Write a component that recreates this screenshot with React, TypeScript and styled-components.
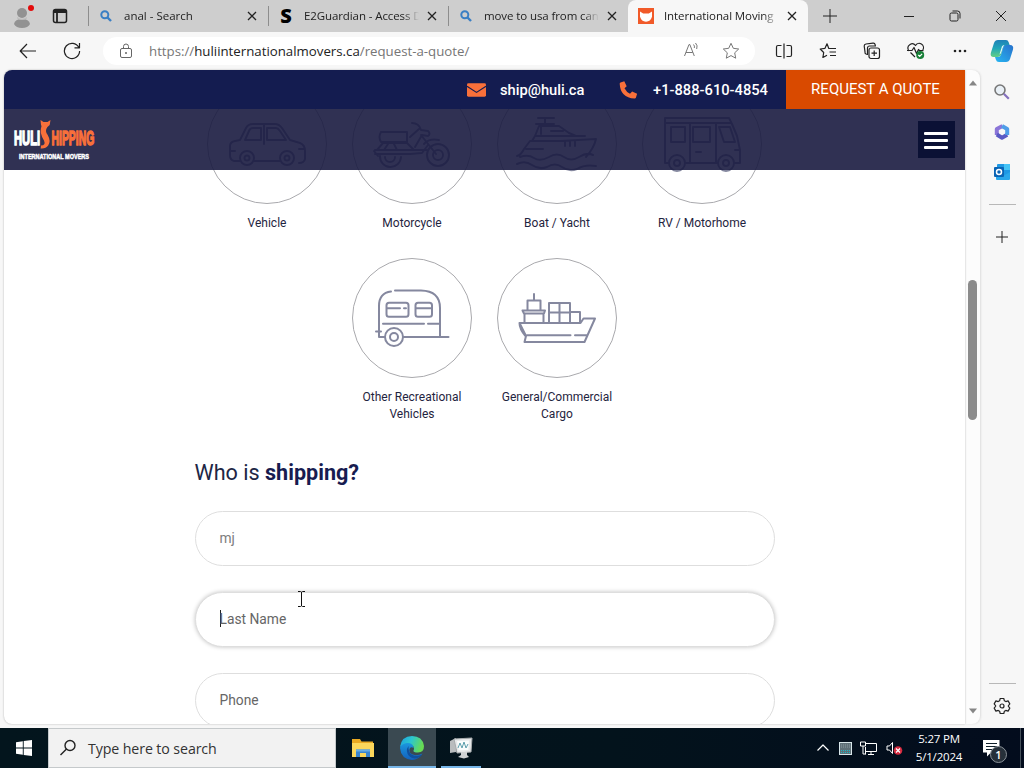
import type { ReactNode } from "react";
import styled, { createGlobalStyle } from "styled-components";

const tabs = [
  { title: "anal - Search", icon: <SearchGlyph />, spacing: "0" },
  { title: "E2Guardian - Access D", icon: <LetterIcon />, spacing: "-0.1px" },
  { title: "move to usa from can", icon: <SearchGlyph />, spacing: "-0.1px" },
  { title: "International Moving", icon: <FoxIcon />, active: true, spacing: "-0.1px" },
];

export default function App(){
  return (
    <Desktop>
      <GlobalStyle />
      <TabStrip>
        <Profile><ProfileIcon /></Profile>
        <Workspaces>
          <Svg w={16} h={16} sw={1.5}><rect x="1.5" y="1.5" width="13" height="13" rx="2" /><path d="M2 3.5h12" strokeWidth="3" /><path d="M5 3v11" strokeWidth="1.8" /></Svg>
        </Workspaces>
        {tabs.map((tab) => (
          <Tab key={tab.title} $active={tab.active}>
            <Favicon>{tab.icon}</Favicon>
            <TabTitle $spacing={tab.spacing}>{tab.title}</TabTitle>
            <Svg w={10} h={10} sw={1.3}><path d="M1 1l8 8M9 1l-8 8" /></Svg>
          </Tab>
        ))}
        <NewTab><Svg w={14} h={14}><path d="M7 0v14M0 7h14" /></Svg></NewTab>
        <WindowButtons>
          <Svg w={12} h={12}><path d="M1 6.5h10" /></Svg>
          <Svg w={12} h={12}><rect x="1" y="3" width="8" height="8" rx="1.5" /><path d="M3.5 1h5A2.5 2.5 0 0 1 11 3.5v5" /></Svg>
          <Svg w={12} h={12}><path d="M1 1l10 10M11 1L1 11" /></Svg>
        </WindowButtons>
      </TabStrip>

      <Toolbar>
        <ToolButton><Svg w={18} h={16} sw={1.2}><path d="M17 8H1.500M8 1L1.200 8L8 15" /></Svg></ToolButton>
        <ToolButton><Svg w={18} h={18} sw={1.2}><path d="M15.800 5.500A7.600 7.600 0 1 0 16.600 9M16.500 1v4.800h-5" /></Svg></ToolButton>
        <AddressBar>
          <LockSlot>
            <Svg w={14} h={16} color="#666"><rect x="1.500" y="5.500" width="11" height="9" rx="1.500" /><path d="M4.500 5.500V3.500a2.500 2.500 0 0 1 5 0v2" /><circle cx="7" cy="10" r=".6" fill="#666" /></Svg>
          </LockSlot>
          <Url>https://<b>huliinternationalmovers.ca</b>/request-a-quote/</Url>
          <AddressActions>
            <Svg w={18} h={16} color="#777"><path d="M2.500 14L7 2.500h.8L12.300 14M4 10.500h6.800M11.500 2.500q1.500 1.500.8 3.500M13.500 1q2.500 2.500 1.200 6" /></Svg>
            <Svg w={18} h={18} color="#777"><path d="M9 1.300l2.300 5 5.400.7-4 3.800 1 5.400L9 13.600l-4.700 2.600 1-5.400-4-3.800 5.400-.7z" /></Svg>
          </AddressActions>
        </AddressBar>
        <BrowserActions>
          <Svg w={18} h={16} sw={1.200}><path d="M6.500 2.500H3A1.500 1.500 0 0 0 1.500 4v8A1.500 1.500 0 0 0 3 13.500h3.500M9 .5v15M11.500 2.500H15A1.500 1.500 0 0 1 16.500 4v8a1.500 1.500 0 0 1-1.500 1.500h-3.500" /></Svg>
          <Svg w={18} h={18} sw={1.200}><path d="M11 6.500H9.800L8 1.800 6 6.300l-4.800.7 3.500 3.500-.8 5L8 13.200M11 6.500h6M10.500 10H17M11 13.500h6" /></Svg>
          <Svg w={18} h={18} sw={1.200}><rect x="6" y="6" width="10.500" height="10.500" rx="2" /><path d="M11.200 8.500v5.500M8.500 11.200H14M4.500 12.500L3 12A2 2 0 0 1 2 9.800L1.200 4a2 2 0 0 1 1.800-2l7-.8a2 2 0 0 1 2.200 1.600l.2 1.200H6.500a2 2 0 0 0-2 2z" /></Svg>
          <Svg w={20} h={18} sw={1.200}><path d="M3 9L2.300 7.700A4.200 4.200 0 0 1 9.500 3.500 4.200 4.200 0 0 1 16.800 8M4.500 10.500L9 15M1 8.500h5l2-3 2.500 6 2-4 1 1.200h4" /><circle cx="14.200" cy="13" r="4" fill="#188038" stroke="none" /><path d="M12.300 13l1.400 1.400 2.400-2.600" stroke="#fff" /></Svg>
          <Svg w={16} h={16} color="none"><g fill="#222"><circle cx="3" cy="8" r="1.300" /><circle cx="8" cy="8" r="1.300" /><circle cx="13" cy="8" r="1.300" /></g></Svg>
        </BrowserActions>
        <CopilotSlot><CopilotIcon /></CopilotSlot>
      </Toolbar>

      <BrowserBody>
        <Page>
          <SiteHeader>
            <ContactBar>
              <Mail>
                <svg width="19" height="14" viewBox="0 0 20 14"><rect width="20" height="14" rx="1.500" fill="#f9703a" /><path d="M0 3l10 6.500L20 3" fill="none" stroke="#141c50" strokeWidth="1.200" /></svg>
                ship@huli.ca
              </Mail>
              <Phone>
                <svg width="19" height="18" viewBox="0 0 18 18"><path d="M1 1.500L4.800.3l2.400 5L5 7.300q1.900 3.800 5.500 5.500l2.100-2.400 5 2.400-1.200 4q-.4.900-1.400.8Q.8 16.600.2 2.700q0-.9.8-1.200z" fill="#f9703a" /></svg>
                +1-888-610-4854
              </Phone>
              <QuoteButton>REQUEST A QUOTE</QuoteButton>
            </ContactBar>
            <NavBar>
              <Logo />
              <MenuButton><i /><i /><i /></MenuButton>
            </NavBar>
          </SiteHeader>

          <Content>
            <Options>
              <Option><Circle><CarIcon /></Circle>Vehicle</Option>
              <Option><Circle><MotorcycleIcon /></Circle>Motorcycle</Option>
              <Option><Circle><BoatIcon /></Circle>Boat / Yacht</Option>
              <Option><Circle><MotorhomeIcon /></Circle>RV / Motorhome</Option>
              <Option><Circle><CaravanIcon /></Circle>Other Recreational Vehicles</Option>
              <Option><Circle><CargoIcon /></Circle>General/Commercial Cargo</Option>
            </Options>
            <Title>Who is <b>shipping?</b></Title>
            <Fields>
              <Field $color="#7d7d7d">mj</Field>
              <Field $focused><Caret />Last Name</Field>
              <Field>Phone</Field>
            </Fields>
          </Content>
          <TextCursor>
            <Svg w={9} h={18} color="#111"><path d="M1 1.500h2.500l1 .7 1-.7H8M4.500 2v14M1 16.500h2.500l1-.7 1 .7H8" /></Svg>
          </TextCursor>
        </Page>
        <Scrollbar>
          <svg width="10" height="6"><path d="M1 5.500L5 .5l4 5z" fill="#868686" /></svg>
          <Thumb />
          <svg width="10" height="6"><path d="M1 .5h8l-4 5z" fill="#868686" /></svg>
        </Scrollbar>
        <Sidebar>
          <SideItem>
            <svg width="18" height="18" viewBox="0 0 18 18" fill="none"><circle cx="7" cy="7" r="5" stroke="#777" strokeWidth="1.600" fill="#e9f0f6" /><path d="M10.800 10.800l5 5" stroke="#8471bd" strokeWidth="2.200" /></svg>
          </SideItem>
          <SideItem><OfficeIcon /></SideItem>
          <SideItem><OutlookIcon /></SideItem>
          <Divider />
          <AddItem><Svg w={12} h={12}><path d="M6 0v12M0 6h12" /></Svg></AddItem>
          <Bottom>
            <Divider />
            <Svg w={18} h={18} sw={1.200}><path d="M7.200 1.500h3.600l.6 2.300 1.400.8 2.300-.7 1.700 3L15.200 9l1.600 2.100-1.700 3-2.300-.7-1.400.8-.6 2.300H7.200l-.6-2.300-1.400-.8-2.300.7-1.700-3L2.800 9 1.200 6.900l1.700-3 2.300.7 1.400-.8z" /><circle cx="9" cy="9" r="2" /></Svg>
          </Bottom>
        </Sidebar>
      </BrowserBody>

      <Taskbar>
        <Start>
          <svg width="16" height="16" viewBox="0 0 16 16" fill="#fff"><path d="M0 2.300L6.800 1.300V7.500H0zM7.700 1.100L16 0v7.500H7.700zM0 8.500h6.800v6.200L0 13.700zM7.700 8.500H16V16l-8.300-1.100z" /></svg>
        </Start>
        <SearchBox>
          <Svg w={18} h={18} sw={1.400}><circle cx="11" cy="6.500" r="5" /><path d="M7.500 10L1.500 16" /></Svg>
          Type here to search
        </SearchBox>
        <TaskItem><FolderIcon /></TaskItem>
        <TaskItem $open $active><EdgeIcon /></TaskItem>
        <TaskItem $open><MonitorIcon /></TaskItem>
        <Tray>
          <Svg w={14} h={10} color="#fff" sw={1.200}><path d="M1.500 7.500L7 2l5.500 5.500" /></Svg>
          <svg width="13" height="13"><rect x=".5" y=".5" width="12" height="12" fill="#5f7078" stroke="#d8e6ea" /><path d="M2 8.500h9M2 10.500h9" stroke="#20b8c6" strokeDasharray="1 1" /><path d="M2 3h9M2 5h9" stroke="#8d9ba1" strokeDasharray="1 1" /></svg>
          <Svg w={17} h={14} color="#fff"><path d="M5.500 2.500h11v8h-11M5.500 6v7.500M8 13.500h6M11 10.500v3M.5 1h5v4h-5zM3 5v8h2.500" /></Svg>
          <svg width="17" height="14" viewBox="0 0 17 14" fill="none"><path d="M1 5h2.500L6.500 1.500v11L3.500 9H1z" stroke="#fff" /><circle cx="12" cy="9.500" r="4.300" fill="#d6293e" /><path d="M10 7.500l4 4M14 7.500l-4 4" stroke="#fff" strokeWidth="1.200" /></svg>
        </Tray>
        <Clock><span>5:27 PM</span><span>5/1/2024</span></Clock>
        <Notifications>
          <svg width="17" height="17" viewBox="0 0 17 17"><path d="M0 0h16.500v12.500H8L4 16.500V12.500H0z" fill="#fff" /><path d="M3 3.500h11M3 6.500h11M3 9.500h7" stroke="#10202b" /></svg>
          <Badge>1</Badge>
        </Notifications>
      </Taskbar>
    </Desktop>
  );
}

type SvgProps = { w: number; h: number; sw?: number; color?: string; children: ReactNode };

function Svg({ w, h, sw = 1, color = "#222", children }: SvgProps){
  return (
    <svg width={w} height={h} viewBox={`0 0 ${w} ${h}`} fill="none" stroke={color} strokeWidth={sw} strokeLinejoin="round">
      {children}
    </svg>
  );
}

function LetterIcon(){
  return <LetterS>S</LetterS>;
}

function SearchGlyph(){
  return (
    <svg width="12" height="12" viewBox="0 0 12 12" fill="none" stroke="#3b7fc4" strokeWidth="2"><circle cx="4.800" cy="4.800" r="3.500" /><path d="M7.500 7.500l3.500 3.500" strokeWidth="2.400" /></svg>
  );
}

function FoxIcon(){
  return (
    <svg width="16" height="16" viewBox="0 0 16 16"><rect width="16" height="16" fill="#f15a29" /><path d="M2 3.500l3.200 2h5.600l3.200-2v5.200q-1.500 4.800-6 5-4.500-.2-6-5z" fill="#fff" /></svg>
  );
}

function ProfileIcon(){
  return (
    <svg width="24" height="26" viewBox="0 0 24 26">
      <circle cx="10" cy="10" r="5" fill="#929292" />
      <path d="M2 21q1-5 8-5t8 5q-2 4-8 4t-8-4z" fill="#929292" />
      <path d="M5 14q5 3.500 10 0v1.500q-5 3-10 0z" fill="#bebebe" />
      <circle cx="19" cy="5" r="3" fill="#e30b0b" />
    </svg>
  );
}

function CopilotIcon(){
  return (
    <svg width="24" height="24" viewBox="0 0 24 24">
      <defs>
        <linearGradient id="cpA" x1="0" y1="0" x2="0" y2="1"><stop offset="0" stopColor="#1e80b8" /><stop offset=".5" stopColor="#20a7b8" /><stop offset="1" stopColor="#62cf84" /></linearGradient>
        <linearGradient id="cpB" x1="1" y1="0" x2="0" y2="1"><stop offset="0" stopColor="#2872cc" /><stop offset="1" stopColor="#27b6f2" /></linearGradient>
      </defs>
      <path d="M8 1h8q2 0 2.700 2.300L20 7h-4q-2 0-2.700 2l-1.800 6Q10.500 18 7.500 18H3.500Q0 18 .8 14L4 4Q5 1 8 1z" fill="url(#cpA)" />
      <path d="M16 23H9q-2.500 0-3.200-2.500L5 18h3q2.500 0 3.300-3l2-6.500Q14 6 16.500 6H20q4 0 3 4.500L20 20q-1 3-4 3z" fill="url(#cpB)" />
      <path d="M9.500 15.500l2.400-8q.6-1.500 2.600-1.500-1.300 1-2 3.500l-1.200 4q-.6 1.500-1.800 2z" fill="#e9f7fb" />
    </svg>
  );
}

function OfficeIcon(){
  return (
    <svg width="18" height="18" viewBox="0 0 18 18" fill="none" strokeWidth="4" strokeLinejoin="round">
      <path d="M9.500 3L3.800 6v6" stroke="#8b75d8" />
      <path d="M3.800 11.500L9 14.700l5.200-2.900" stroke="#5a5ac4" />
      <path d="M14.200 12V6L9 3" stroke="#4f9de8" />
    </svg>
  );
}

function OutlookIcon(){
  return (
    <svg width="18" height="18" viewBox="0 0 18 18">
      <rect x="4" y="1" width="13" height="12" rx="1" fill="#1e98e4" />
      <path d="M11 1h6v6h-6z" fill="#45c4f6" />
      <path d="M3 9l7 4 7-4v7a1 1 0 0 1-1 1H4a1 1 0 0 1-1-1z" fill="#29a7eb" />
      <rect x="1" y="4" width="10" height="10" rx="1" fill="#0a64b5" />
      <circle cx="6" cy="9" r="2.500" fill="none" stroke="#fff" strokeWidth="1.500" />
    </svg>
  );
}

function FolderIcon(){
  return (
    <svg width="22" height="19" viewBox="0 0 22 19">
      <path d="M0 0h8l1.500 2.500H21V18H0z" fill="#e9a922" />
      <path d="M0 4h22v14H0z" fill="#fbd75b" />
      <path d="M4 18v-7.500h14V18h-4v-4H8v4z" fill="#3985cf" />
      <path d="M4 10.500h14v2H4z" fill="#68aee5" />
    </svg>
  );
}

function EdgeIcon(){
  return (
    <svg width="24" height="24" viewBox="0 0 24 24">
      <defs>
        <linearGradient id="edgeTop" x1="0" y1="0" x2="1" y2=".3"><stop offset="0" stopColor="#1b9fe0" /><stop offset=".5" stopColor="#2cc6cf" /><stop offset="1" stopColor="#67db54" /></linearGradient>
        <linearGradient id="edgeLow" x1="0" y1="0" x2="0" y2="1"><stop offset="0" stopColor="#1c9ae0" /><stop offset="1" stopColor="#1361bd" /></linearGradient>
      </defs>
      <path d="M0 12Q.5 6 7 6q7 0 6.500 6-3-2-4 1-1 5 5 6 4 .7 8-1.500Q18.500 24 12 24 1 23 0 12z" fill="url(#edgeLow)" />
      <path d="M0 11Q1.500 0 12 0q10.500 0 12 10 0 6.500-6 6.500-5 0-4.500-2 1-1.500.2-3.500Q12 6.500 7 7 2.500 7.500 0 11z" fill="url(#edgeTop)" />
      <path d="M8.500 10Q5 15 9 20q4 4 10 1.500 2-1 3-3-5 2.500-9.500.5-4.500-2.500-4-9z" fill="#11509d" />
    </svg>
  );
}

function MonitorIcon(){
  return (
    <svg width="24" height="22" viewBox="0 0 24 22">
      <path d="M1 4l6-3v14l-6 1z" fill="#b9bcbe" />
      <path d="M5 2l18-1-1 14-14 1z" fill="#e6e8e9" stroke="#a7abad" />
      <path d="M8 4l12-.6-.6 9.500-9.800.6z" fill="#f9fcfc" />
      <path d="M9 11l2-5 2 5 2-6 2 6 2-4" fill="none" stroke="#5c9eac" />
      <path d="M12 15h6v3l2 2-5 1.500L9 20l3-2z" fill="#cfd2d4" />
    </svg>
  );
}

function Logo(){
  return (
    <svg width="84" height="44" viewBox="0 0 84 44" fontFamily="'Liberation Sans', sans-serif" fontWeight="700">
      <text transform="translate(2 27) scale(.56 1)" fontSize="20" fill="#fff" stroke="#fff" strokeWidth="1.500">HULI</text>
      <path d="M28.500 2l3 2h4l3-2-.8 5-2.300 2q-3 4 .3 8 3.500 6 .5 10.500-2.500 3.500-7.500 3l.3-3q5 0 3-5-5-8-2.500-14.500L29 7z" fill="#f9703a" />
      <text transform="translate(39.500 27) scale(.52 1)" fontSize="20" fill="#f9703a" stroke="#f9703a" strokeWidth="1.500">HIPPING</text>
      <text x="7" y="41" fontSize="7.500" fill="#fff" stroke="#fff" strokeWidth=".5" textLength="70" lengthAdjust="spacingAndGlyphs">INTERNATIONAL MOVERS</text>
    </svg>
  );
}

// the option drawings fill the whole 120px circle
function Drawing({ children }: { children: ReactNode }){
  return (
    <svg width="120" height="120" viewBox="0 0 120 120" fill="none" stroke="#85889f" strokeWidth="2" strokeLinecap="round" strokeLinejoin="round">
      {children}
    </svg>
  );
}

function CarIcon(){
  return (
    <Drawing>
      <path d="M33 77h-6q-4-1-4-6v-9q0-4 5-5l5-1 6-12q2-4 7-4h22q4 0 7 4l8 12 10 3q5 2 5 8v8q-1 4-6 4M47 77h26M38 56l4-9q1-3 4-3h8v12zM60 44h9q2 0 4 3l6 9H60zM57 40v20M92 65h5M23 67h5" />
      <circle cx="40" cy="74" r="7" /><circle cx="40" cy="74" r="2.500" />
      <circle cx="80" cy="74" r="7" /><circle cx="80" cy="74" r="2.500" />
    </Drawing>
  );
}

function MotorcycleIcon(){
  return (
    <Drawing>
      <circle cx="86" cy="71" r="11" /><circle cx="86" cy="71" r="5" />
      <path d="M28 72a10 10 0 0 0 21 1M33 73a5 5 0 0 0 10 0M29 48h26v10H29q-3-5 0-10M23 66h52M23 70h35l12-1 6-8M25 66l6-7h24l7 7M60 39q7 0 9 7l7 1q3 3 0 5l-6-1-7 12M58 53l9-8M69 51l15 19M72 60q5-6 15-4M32 66l4-6M45 66l-3-6M22 67l4 5" />
    </Drawing>
  );
}

function BoatIcon(){
  return (
    <Drawing>
      <path d="M20 72q4-1 7-7l6-8h30l36-2q-2 9-10 18M35 57l3-5h50M38 52l4-10h20l10 7 7 3M41 34h16M48 34v5M39 40h18M44 43v7M54 47h12M68 57v5M73 57v5M78 57v5M29 65h17M20 80q8-4 15 1t15 2q8-5 15 0t15 2q8-5 19-3M23 73q8-3 14 1t15-1q8-5 15 0t15 0 14-2" />
    </Drawing>
  );
}

function MotorhomeIcon(){
  return (
    <Drawing>
      <path d="M27 79h-4V34h64l3 6 5 12 3 14v13h-6M43 79h33M23 39h66M48 39v39M74 39v39M29 43h14v15H29zM51 43h17v15H51zM77 43h11l5 15H82zM93 66h5M54 68h5" />
      <circle cx="35" cy="79" r="8" /><circle cx="35" cy="79" r="3" />
      <circle cx="84" cy="79" r="8" /><circle cx="84" cy="79" r="3" />
    </Drawing>
  );
}

function CaravanIcon(){
  return (
    <Drawing>
      <path d="M39 33.500Q27 35 27 48v31h6M43 32.500h26Q88 33 88 50v29M51 79h45.500M31 65.700h41M76 65.700h11M24 73.500h5" />
      <rect x="34.500" y="44.700" width="22" height="14" rx="2.500" /><path d="M35 50.300h13M52 50.300h2" />
      <rect x="63.500" y="44.700" width="16.500" height="14" rx="2.500" /><path d="M64 50.300h16" />
      <circle cx="42" cy="79" r="9" /><circle cx="42" cy="79" r="4" />
    </Drawing>
  );
}

function CargoIcon(){
  return (
    <Drawing>
      <path d="M37 36v6M30.500 52V42.500h13V52M25.500 52.500h22.500l-1 3H27zM27.500 56v8M46.500 56v8M31 55.500h7M52 64V45h21v9h10v10M52 54.500h21M62.500 45v19M73 54v10M22.500 65h61l3-4.500H98L87.500 84h-60l1.500-6zM22.500 65q0 6 6 13M30 77.300h43.500M78 77.300h12" />
    </Drawing>
  );
}

const GlobalStyle = createGlobalStyle`
  * {
    box-sizing: border-box;
  }
  body {
    margin: 0;
    overflow: hidden;
  }
  svg {
    display: block;
    flex-shrink: 0;
  }
`;
const Desktop = styled.div`
  width: 1024px;
  height: 768px;
  display: flex;
  flex-direction: column;
  background-color: #f7f7f7;
  font-family: "Open Sans", "Noto Sans", sans-serif;
  color: #222;
`;
const TabStrip = styled.div`
  height: 32px;
  display: flex;
  background-color: #cecece;
  flex-shrink: 0;
`;
const Profile = styled.div`
  width: 44px;
  padding: 3px 0 0 12px;
`;
const Workspaces = styled.div`
  width: 44px;
  padding: 8px 0 0 8px;
`;
const Tab = styled.div<{ $active?: boolean }>`
  width: 180px;
  height: 32px;
  display: flex;
  align-items: center;
  padding: 0 11px 0 10px;
  background: ${(p) => (p.$active ? "#f7f7f7" : "linear-gradient(#8d8d8d, #8d8d8d) left center / 1px 20px no-repeat")};
  border-radius: ${(p) => (p.$active ? "8px 8px 0 0" : "0")};
`;
const Favicon = styled.div`
  width: 16px;
  display: flex;
  justify-content: center;
  margin-right: 10px;
`;
const LetterS = styled.span`
  font: 800 20px/20px "Open Sans", sans-serif;
  color: #000;
`;
const TabTitle = styled.div<{ $spacing: string }>`
  flex: 1;
  margin-right: 8px;
  overflow: hidden;
  white-space: nowrap;
  font-size: 11.5px;
  line-height: 16px;
  letter-spacing: ${(p) => p.$spacing};
  mask-image: linear-gradient(to right, #000 86%, transparent);
`;
const NewTab = styled.div`
  padding: 9px 0 0 15px;
`;
const WindowButtons = styled.div`
  margin-left: auto;
  display: flex;
  align-items: center;
  gap: 34px;
  padding-right: 17px;
`;
const Toolbar = styled.div`
  height: 38px;
  display: flex;
  align-items: center;
  padding-left: 6px;
  flex-shrink: 0;
`;
const ToolButton = styled.div`
  width: 44px;
  display: flex;
  justify-content: center;
`;
const AddressBar = styled.div`
  width: 652px;
  height: 28px;
  margin-left: 9px;
  display: flex;
  align-items: center;
  border-radius: 14px;
  background-color: #fff;
`;
const LockSlot = styled.div`
  width: 46px;
  padding-left: 16px;
`;
const Url = styled.div`
  font-size: 13.25px;
  color: #767676;
  white-space: nowrap;
  b {
    font-weight: 400;
    color: #222;
  }
`;
const AddressActions = styled.div`
  margin-left: auto;
  display: flex;
  gap: 22px;
  padding-right: 15px;
`;
const BrowserActions = styled.div`
  width: 213px;
  display: flex;
  align-items: center;
  justify-content: space-between;
  padding-left: 20px;
`;
const CopilotSlot = styled.div`
  margin-left: 22px;
`;
const BrowserBody = styled.div`
  height: 658px;
  display: flex;
  padding: 0 0 4px 4px;
  flex-shrink: 0;
`;
const Page = styled.div`
  position: relative;
  width: 961px;
  overflow: hidden;
  background-color: #fff;
  border-radius: 8px 0 0 8px;
  box-shadow: 0 0 2px #aaa;
  font-family: Roboto, sans-serif;
`;
const SiteHeader = styled.header`
  position: absolute;
  top: 0;
  left: 0;
  right: 0;
`;
const ContactBar = styled.div`
  height: 39px;
  display: flex;
  align-items: center;
  justify-content: flex-end;
  background-color: #141c50;
  color: #fff;
  font-size: 14.7px;
  font-weight: 500;
`;
const Mail = styled.div`
  width: 152px;
  display: flex;
  align-items: center;
  gap: 14px;
`;
const Phone = styled.div`
  width: 167px;
  display: flex;
  align-items: center;
  gap: 15px;
  white-space: nowrap;
`;
const QuoteButton = styled.div`
  width: 179px;
  height: 39px;
  line-height: 38px;
  text-align: center;
  background-color: #d94a00;
  font-size: 15px;
  font-weight: 400;
`;
const NavBar = styled.div`
  height: 61px;
  display: flex;
  align-items: center;
  justify-content: space-between;
  padding: 0 10px 0 8px;
  background-color: rgba(26, 27, 64, 0.9);
`;
const MenuButton = styled.div`
  width: 37px;
  height: 37px;
  display: flex;
  flex-direction: column;
  align-items: center;
  justify-content: center;
  gap: 4px;
  padding: 1px 1px 0 0;
  background-color: #0b1135;
  i {
    width: 24px;
    height: 3px;
    border-radius: 1px;
    background-color: #fff;
  }
`;
const Content = styled.div`
  width: 580px;
  margin: 0 auto;
  padding-top: 14px;
`;
const Options = styled.div`
  display: flex;
  flex-wrap: wrap;
  justify-content: center;
`;
const Option = styled.div`
  width: 145px;
  height: 174px;
  padding: 0 12px;
  text-align: center;
  font-size: 12px;
  line-height: 17px;
  color: #1f2440;
`;
const Circle = styled.div`
  width: 120px;
  height: 120px;
  margin-bottom: 11px;
  border: 1px solid #a9a9ad;
  border-radius: 50%;
  svg {
    margin: -1px;
  }
`;
const Title = styled.h2`
  margin: 27px 0 0;
  font-size: 21.6px;
  line-height: 28px;
  font-weight: 400;
  color: #202645;
  b {
    font-weight: 700;
    color: #171c50;
  }
`;
const Fields = styled.div`
  margin-top: 24px;
  display: flex;
  flex-direction: column;
  gap: 26px;
`;
const Field = styled.div<{ $focused?: boolean; $color?: string }>`
  height: 55px;
  display: flex;
  align-items: center;
  padding: 0 24px 2px;
  border: 1px solid #dedede;
  border-radius: 28px;
  background-color: #fff;
  font-size: 13.8px;
  color: ${(p) => p.$color ?? "#666"};
  box-shadow: ${(p) => (p.$focused ? "0 0 4px rgba(0, 0, 0, 0.25)" : "none")};
`;
const Caret = styled.span`
  width: 1px;
  height: 17px;
  margin-right: -1px;
  background-color: #222;
`;
const TextCursor = styled.div`
  position: absolute;
  left: 293px;
  top: 520px;
`;
const Scrollbar = styled.div`
  width: 15px;
  display: flex;
  flex-direction: column;
  align-items: center;
  padding: 10px 0 10px;
  background-color: #fcfcfc;
  border-radius: 0 8px 8px 0;
  box-shadow: 1px 0 2px #ddd;
  svg:last-child {
    margin-top: auto;
  }
`;
const Thumb = styled.div`
  width: 9px;
  height: 140px;
  margin-top: 194px;
  border-radius: 5px;
  background-color: #8b8b8b;
`;
const Sidebar = styled.div`
  flex: 1;
  display: flex;
  flex-direction: column;
  align-items: center;
  padding-top: 2px;
`;
const SideItem = styled.div`
  height: 40px;
  display: flex;
  align-items: center;
`;
const Divider = styled.div`
  width: 27px;
  height: 1px;
  margin-top: 12px;
  background-color: #b8b8b8;
`;
const AddItem = styled.div`
  padding-top: 26px;
`;
const Bottom = styled.div`
  margin-top: auto;
  display: flex;
  flex-direction: column;
  align-items: center;
  gap: 13px;
  padding-bottom: 9px;
`;
const Taskbar = styled.div`
  height: 40px;
  display: flex;
  color: #fff;
  background: linear-gradient(to right, #03151d, #03131c 60%, #030c1d);
  flex-shrink: 0;
`;
const Start = styled.div`
  width: 48px;
  display: flex;
  align-items: center;
  justify-content: center;
`;
const SearchBox = styled.div`
  width: 288px;
  display: flex;
  align-items: center;
  gap: 11px;
  margin-right: 3px;
  padding-left: 10px;
  border: 1px solid #c5c9cb;
  background-color: #f2f2f2;
  color: #333;
  font-size: 14.2px;
  letter-spacing: -0.1px;
`;
const TaskItem = styled.div<{ $open?: boolean; $active?: boolean }>`
  width: 48px;
  margin-right: 1px;
  display: flex;
  align-items: center;
  justify-content: center;
  background: ${(p) => (p.$open ? "linear-gradient(#76b5e8, #76b5e8) center bottom no-repeat" : "none")};
  background-size: ${(p) => (p.$active ? "48px 2px" : "40px 2px")};
  background-color: ${(p) => (p.$active ? "#3a4951" : "transparent")};
`;
const Tray = styled.div`
  width: 87px;
  margin-left: auto;
  display: flex;
  align-items: center;
  justify-content: space-between;
`;
const Clock = styled.div`
  width: 72px;
  display: flex;
  flex-direction: column;
  align-items: center;
  justify-content: center;
  font-size: 11.5px;
  line-height: 18px;
  letter-spacing: -0.2px;
`;
const Notifications = styled.div`
  position: relative;
  width: 46px;
  padding: 12px 0 0 8px;
  border-right: 1px solid #46515b;
  margin-right: 3px;
`;
const Badge = styled.span`
  position: absolute;
  left: 15px;
  top: 18px;
  width: 17px;
  height: 17px;
  border: 1px solid #8b9299;
  border-radius: 50%;
  background-color: #26303a;
  text-align: center;
  font: 600 11px/15px "Open Sans", sans-serif;
`;
